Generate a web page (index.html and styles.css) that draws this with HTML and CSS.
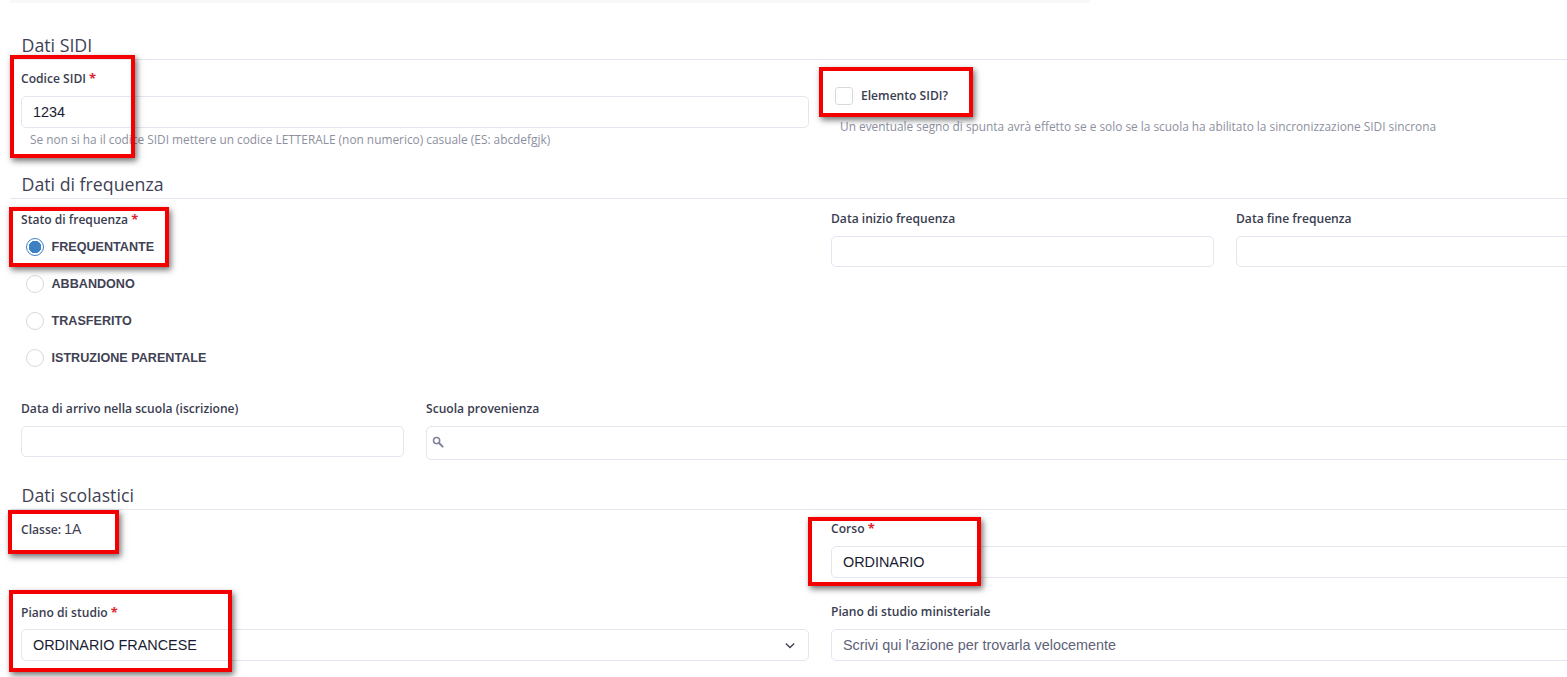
FILE: index.html
```html
<!DOCTYPE html>
<html lang="it">
<head>
<meta charset="utf-8">
<title>Dati SIDI</title>
<link rel="stylesheet" href="styles.css">
</head>
<body>
<div class="page">
  <div class="topstrip"></div>

  <h2 class="section first">Dati SIDI</h2>
  <div class="grid two sidi">
    <div class="field">
      <label class="label">Codice SIDI <span class="req">*</span></label>
      <div class="input value">1234</div>
      <div class="hint">Se non si ha il codice SIDI mettere un codice LETTERALE (non numerico) casuale (ES: abcdefgjk)</div>
    </div>
    <div class="field check-field">
      <div class="check-row"><span class="checkbox"></span><span class="check-label">Elemento SIDI?</span></div>
      <div class="hint check-hint">Un eventuale segno di spunta avrà effetto se e solo se la scuola ha abilitato la sincronizzazione SIDI sincrona</div>
    </div>
  </div>

  <h2 class="section freq">Dati di frequenza</h2>
  <div class="grid four stato">
    <div class="span2 field">
      <label class="label">Stato di frequenza <span class="req">*</span></label>
      <div class="radios">
        <div class="radio-row"><span class="radio on"></span><span class="radio-label">FREQUENTANTE</span></div>
        <div class="radio-row"><span class="radio"></span><span class="radio-label">ABBANDONO</span></div>
        <div class="radio-row"><span class="radio"></span><span class="radio-label">TRASFERITO</span></div>
        <div class="radio-row"><span class="radio"></span><span class="radio-label">ISTRUZIONE PARENTALE</span></div>
      </div>
    </div>
    <div class="field">
      <label class="label">Data inizio frequenza</label>
      <div class="input short"></div>
    </div>
    <div class="field">
      <label class="label">Data fine frequenza</label>
      <div class="input short"></div>
    </div>
  </div>
  <div class="grid four arrivo">
    <div class="field">
      <label class="label">Data di arrivo nella scuola (iscrizione)</label>
      <div class="input short"></div>
    </div>
    <div class="span3 field">
      <label class="label">Scuola provenienza</label>
      <div class="input search">
        <svg class="search-icon" viewBox="0 0 12 12" width="12" height="12" aria-hidden="true"><circle cx="4.6" cy="4.6" r="3.1" fill="none" stroke="#7e8299" stroke-width="1.5"/><path d="M7 7l3.6 3.6" stroke="#7e8299" stroke-width="2" stroke-linecap="round"/></svg>
      </div>
    </div>
  </div>

  <h2 class="section scol">Dati scolastici</h2>
  <div class="grid two corso-row">
    <div class="classe"><span class="classe-key">Classe:</span> <span class="classe-val">1A</span></div>
    <div class="field">
      <label class="label">Corso <span class="req">*</span></label>
      <div class="input value">ORDINARIO</div>
    </div>
  </div>
  <div class="grid two piano-row">
    <div class="field">
      <label class="label">Piano di studio <span class="req">*</span></label>
      <div class="input value select">ORDINARIO FRANCESE
        <svg class="chevron" viewBox="0 0 12 8" width="10" height="7" aria-hidden="true"><path d="M1 1.5l5 5 5-5" fill="none" stroke="#3f4254" stroke-width="1.6"/></svg>
      </div>
    </div>
    <div class="field">
      <label class="label">Piano di studio ministeriale</label>
      <div class="input placeholder">Scrivi qui l'azione per trovarla velocemente</div>
    </div>
  </div>

  <div class="mark m-codice"></div>
  <div class="mark m-elemento"></div>
  <div class="mark m-stato"></div>
  <div class="mark m-classe"></div>
  <div class="mark m-corso"></div>
  <div class="mark m-piano"></div>
</div>
</body>
</html>
```
FILE: styles.css
```css
html, body { margin: 0; padding: 0; background: #fff; overflow: hidden; height: 677px; }
.page { position: relative; width: 1620px; padding-left: 10px; box-sizing: border-box; font-family: "Open Sans", "Liberation Sans", sans-serif; color: #3f4254; }
.topstrip { width: 1080px; height: 3px; background: #f8f8f8; }
.section { margin: 0; padding: 0 0 3px 11.5px; font-size: 17.75px; font-weight: 400; line-height: 22px; color: #3f4254; border-bottom: 1px solid #e4e6ef; }
.section.first { margin-top: 31px; }
.section.freq { margin-top: 16px; }
.section.scol { margin-top: 39px; }
.grid { display: grid; column-gap: 22px; padding-left: 11px; }
.two { grid-template-columns: 788px 788px; }
.four { grid-template-columns: 383px 383px 383px 383px; }
.span2 { grid-column: span 2; }
.span3 { grid-column: span 3; }
.sidi { padding-top: 9px; height: 88px; }
.label { display: block; font-size: 12.1px; font-weight: 600; line-height: 18px; height: 18px; margin-bottom: 9px; color: #3a3d4f; }
.req { color: #e0242f; font-size: 13px; font-weight: 700; }
.input { box-sizing: border-box; height: 32px; border: 1px solid #e4e6ef; border-radius: 5px; background: #fff; font-family: "Liberation Sans", Arial, sans-serif; font-size: 14.4px; line-height: 30px; padding-left: 11px; color: #181c32; position: relative; }
.input.short { height: 31px; }
.input.search { height: 34px; }
.search-icon { position: absolute; left: 5px; top: 9px; }
.chevron { position: absolute; right: 13px; top: 12px; }
.placeholder { color: #5e6278; }
.hint { font-size: 11.87px; line-height: 16px; color: #8d90a0; padding: 3px 0 0 9px; }
.check-row { display: flex; align-items: center; padding: 17px 0 0 4px; height: 19px; }
.checkbox { box-sizing: border-box; width: 18px; height: 18px; border: 1px solid #d8d8de; border-radius: 3px; background: #fff; }
.check-label { font-size: 12.1px; font-weight: 600; margin-left: 8px; color: #3a3d4f; }
.check-hint { padding-top: 13px; }
.stato { padding-top: 11px; height: 190px; }
.stato .label { margin-bottom: 8px; }
.arrivo .label { margin-bottom: 8px; }
.radios { margin-top: -8px; }
.radio-row { display: flex; align-items: center; height: 37px; padding-left: 5px; }
.radio { box-sizing: border-box; width: 18px; height: 18px; border: 1px solid #d8d8de; border-radius: 50%; background: #fff; }
.radio.on { border-color: #3d81c4; background: radial-gradient(circle, #3d81c4 0, #3d81c4 6px, #fff 6.5px); }
.radio-label { margin-left: 7.5px; font-family: "Liberation Sans", Arial, sans-serif; font-size: 12.6px; font-weight: 700; color: #3f4254; }
.arrivo { height: 45px; }
.corso-row { padding-top: 9px; height: 84px; }
.piano-row .label { margin-bottom: 8px; }
.classe { font-size: 12.1px; line-height: 18px; padding-top: 1px; }
.classe-key { font-weight: 600; }
.classe-val { font-family: "Liberation Sans", Arial, sans-serif; font-size: 14px; }
.mark { position: absolute; box-sizing: border-box; border: 4px solid #f40000; box-shadow: 2px 3px 6px rgba(0,0,0,.55); }
.m-codice { left: 10px; top: 55px; width: 125px; height: 103px; }
.m-elemento { left: 819px; top: 67px; width: 154px; height: 50px; }
.m-stato { left: 9px; top: 207px; width: 160px; height: 60px; }
.m-classe { left: 8px; top: 510px; width: 111px; height: 44px; }
.m-corso { left: 808px; top: 517px; width: 173px; height: 69px; }
.m-piano { left: 9px; top: 590px; width: 223px; height: 82px; }
```
